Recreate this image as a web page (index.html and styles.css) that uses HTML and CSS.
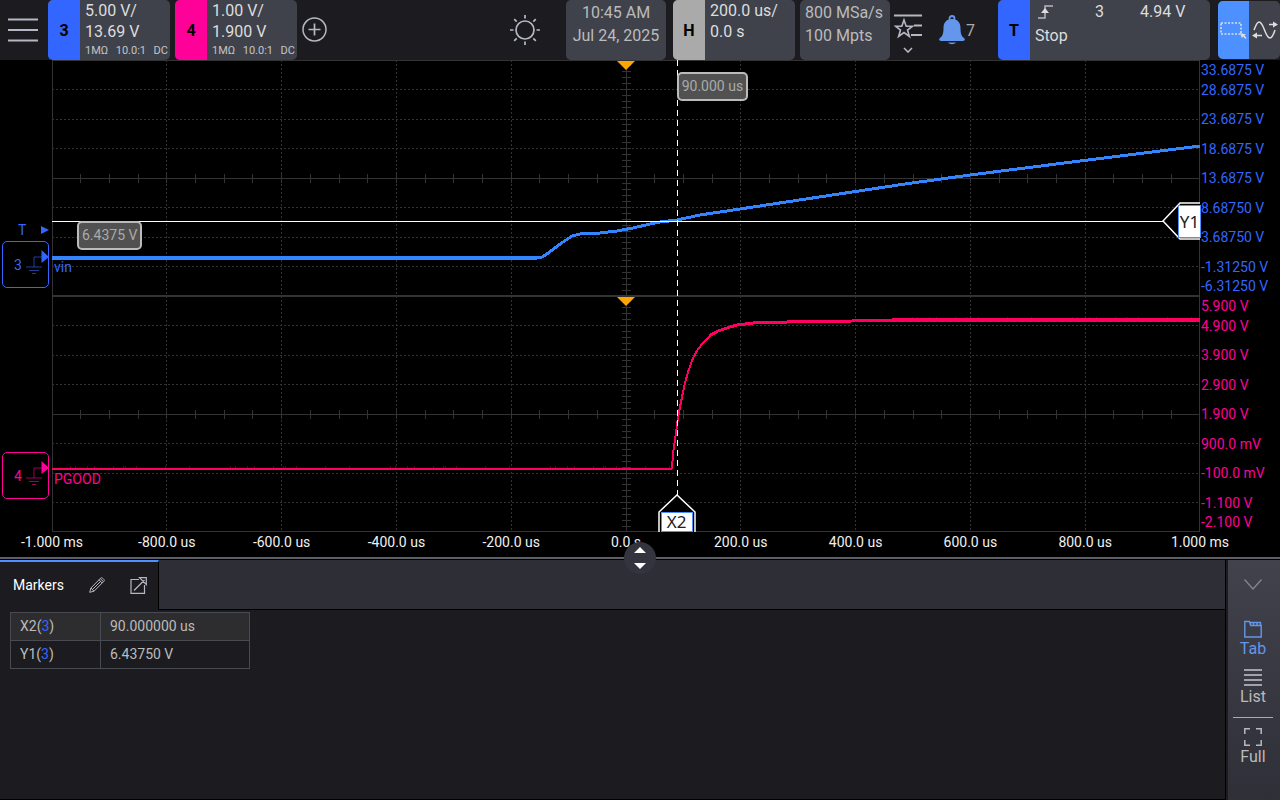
FILE: index.html
```html
<!DOCTYPE html>
<html lang="en">
<head>
    <meta charset="UTF-8" />
    <title>Oscilloscope</title>
    <link rel="stylesheet" href="styles.css">
</head>
<body>
    <div id="scope">
        <header class="topbar">
            <button class="icon-btn menu-btn" aria-label="Menu">
                <svg width="30" height="24" viewBox="0 0 30 24"><path d="M0 1.5h30M0 12h30M0 22.5h30" stroke-width="2" /></svg>
            </button>
            <button class="chip ch3">
                <span class="chip-tag">3</span>
                <span class="chip-body">
                    <span>5.00 V/</span>
                    <span>13.69 V</span>
                    <span class="chip-small"><i>1MΩ</i><i>10.0:1</i><i>DC</i></span>
                </span>
            </button>
            <button class="chip ch4">
                <span class="chip-tag">4</span>
                <span class="chip-body">
                    <span>1.00 V/</span>
                    <span>1.900 V</span>
                    <span class="chip-small"><i>1MΩ</i><i>10.0:1</i><i>DC</i></span>
                </span>
            </button>
            <button class="icon-btn" aria-label="Add channel">
                <svg width="26" height="26" viewBox="0 0 26 26"><circle cx="12.500" cy="12.500" r="11.500" stroke-width="1.5" /><path d="M12.500 6.500v12M6.500 12.500h12" stroke-width="1.7" /></svg>
            </button>

            <button class="icon-btn sun-btn" aria-label="Brightness">
                <svg width="30" height="30" viewBox="0 0 30 30" stroke-width="1.7">
                    <circle cx="15" cy="15" r="9" />
                    <path d="M15 0v3.500M15 26.500v3.500M0 15h3.500M26.500 15h3.500M4.200 4.200l2.500 2.500M23.300 23.300l2.500 2.500M25.800 4.200l-2.500 2.500M6.700 23.300l-2.500 2.500" />
                </svg>
            </button>
            <div class="info clock">
                <span>10:45 AM</span>
                <span>Jul 24, 2025</span>
            </div>
            <button class="chip horiz">
                <span class="chip-tag">H</span>
                <span class="chip-body">
                    <span>200.0 us/</span>
                    <span>0.0 s</span>
                </span>
            </button>
            <div class="info sampling">
                <span>800 MSa/s</span>
                <span>100 Mpts</span>
            </div>
            <button class="icon-btn fav-btn" aria-label="Favorites">
                <svg width="28" height="40" viewBox="0 0 28 40" stroke-width="1.6">
                    <path d="M0 2.500h28M20 12.500h8M17 22h11" stroke-width="1.8" />
                    <path d="M10 7l2.200 6.200h6.300l-5 3.900 1.900 6.400-5.400-3.900-5.400 3.900 1.900-6.400-5-3.900h6.300z" />
                    <path d="M10 35l4 4 4-4" />
                </svg>
            </button>
            <button class="icon-btn bell-btn">
                <svg width="26" height="30" viewBox="0 0 26 30">
                    <circle cx="13" cy="3.500" r="2.500" stroke="#6496ec" stroke-width="1.8" />
                    <path d="M13 4c-6 0-8.500 4-8.500 9 0 6-1 8-4 10.500-.8 1.500 0 2.500 1.500 2.500h22c1.500 0 2.300-1 1.500-2.500-3-2.500-4-4.500-4-10.500 0-5-2.500-9-8.500-9z" fill="#6496ec" stroke="none" />
                    <path d="M9 27.500c1.500 2.300 6.500 2.300 8 0z" fill="#6496ec" stroke="none" />
                </svg>
                7
            </button>
            <button class="chip trigger">
                <span class="chip-tag">T</span>
                <span class="chip-body">
                    <span class="trig-row">
                        <svg width="15" height="14" viewBox="0 0 15 14"><path d="M0 13h7V1h8" stroke-width="1.500" /><path d="M7 3l4 5H3z" fill="#ddd" stroke="none" /></svg>
                        <b>3</b><b>4.94 V</b>
                    </span>
                    <span>Stop</span>
                </span>
            </button>
            <div class="mode">
                <button class="active" aria-label="Zoom box">
                    <svg width="27" height="18" viewBox="0 0 27 18"><path d="M1 2h20v11H1z" stroke-dasharray="2 1.500" stroke-width="1.600" /><path d="M20 12l6 1.500-1.500 1 2 2.500-1.200 1-2-2.500-1.500 1.500z" fill="#ddd" stroke="none" /></svg>
                </button>
                <button aria-label="Pan">
                    <svg width="26" height="18" viewBox="0 0 26 18"><path d="M2 9c2-5 3-8 5-8 5 0 6 16 11 16 2 0 4-5 5-8" stroke-width="1.500" /><path d="M17 3.500h7M2 14.500h8" stroke-width="1.400" /><path d="M26 3.500l-5-3v6zM0 14.500l5-3v6z" fill="#ddd" stroke="none" /></svg>
                </button>
            </div>
        </header>

        <main class="display">
            <div class="plots">
                <section class="lane blue">
                    <div class="gutter">
                        <div class="trig-level">T<svg width="8" height="8" viewBox="0 0 8 8"><path d="M0 0l8 4-8 4z" /></svg></div>
                        <div class="ground g3">3
                            <svg width="24" height="30" viewBox="0 0 24 30"><path d="M9 18V8h8M1 18h16M4 21.500h10M7 24.500h4" class="gnd" /><path d="M16.500 1L24 8l-7.500 6z" /></svg>
                        </div>
                    </div>
                    <div class="graticule">
                        <svg class="grid"></svg>
                        <svg class="trace" viewBox="0 0 1148 236" preserveAspectRatio="none">
                            <path d="M0 198H485" stroke-width="4" />
                            <path d="M485 198L490 197L495 194L503 188L511 182L520 176L528 174L548 173L565 171L581 168L598 164L608 162L625 160L648 155L688 149L853 124L918 115L1028 101L1148 86" stroke-width="3" />
                        </svg>
                        <span class="trace-name vin">vin</span>
                    </div>
                    <div class="scale">
                        <span>33.6875 V</span><span>28.6875 V</span><span>23.6875 V</span><span>18.6875 V</span><span>13.6875 V</span><span>8.68750 V</span><span>3.68750 V</span><span>-1.31250 V</span><span>-6.31250 V</span>
                    </div>
                </section>
                <section class="lane pink">
                    <div class="gutter">
                        <div class="ground g4">4
                            <svg width="24" height="30" viewBox="0 0 24 30"><path d="M9 18V8h8M1 18h16M4 21.500h10M7 24.500h4" class="gnd" /><path d="M16.500 1L24 8l-7.500 6z" /></svg>
                        </div>
                    </div>
                    <div class="graticule">
                        <svg class="grid"></svg>
                        <svg class="trace" viewBox="0 0 1148 236" preserveAspectRatio="none">
                            <path class="noise" d="M18 171H620M860 22H1148" stroke-width="2" stroke-dasharray="1 4 1 11 1 6 1 18 1 9 1 1 1 10 1 28 1 23 1 40" />
                            <path d="M0 173H620" stroke-width="2" />
                            <path d="M620 173L621 158L623 144L625 129L626 121L630 101L633 87L636 76L641 62L646 53L651 47L658 40" stroke-width="2" />
                            <path d="M657 40L666 35L675 32L685 29L701 27L735 26L800 25L1148 24" stroke-width="3" />
                            <path d="M840 24H1148" stroke-width="4" />
                        </svg>
                        <span class="trace-name pgood">PGOOD</span>
                    </div>
                    <div class="scale">
                        <span>5.900 V</span><span>4.900 V</span><span>3.900 V</span><span>2.900 V</span><span>1.900 V</span><span>900.0 mV</span><span>-100.0 mV</span><span>-1.100 V</span><span>-2.100 V</span>
                    </div>
                </section>

                <div class="markers">
                    <div class="line-y"></div>
                    <div class="line-x"></div>
                    <span class="readout read-x">90.000 us</span>
                    <span class="readout read-y">6.4375 V</span>
                    <div class="flag flag-x">
                        <svg width="38" height="38" viewBox="0 0 38 38"><path d="M1 38V18L19 1l18 17v20" /></svg>
                        <span>X2</span>
                    </div>
                    <div class="flag flag-y">
                        <svg width="38" height="38" viewBox="0 0 38 38"><path d="M38 1H18L1 19l17 18h20" /></svg>
                        <span>Y1</span>
                    </div>
                </div>
            </div>
            <div class="time-axis">
                <span>-1.000 ms</span><span>-800.0 us</span><span>-600.0 us</span><span>-400.0 us</span><span>-200.0 us</span><span>0.0 s</span><span>200.0 us</span><span>400.0 us</span><span>600.0 us</span><span>800.0 us</span><span>1.000 ms</span>
            </div>
        </main>

        <div class="splitter">
            <button class="handle" aria-label="Resize panel">
                <svg width="12" height="22" viewBox="0 0 12 22"><path d="M6 0l6 6H0zM6 22l6-6H0z" fill="#fff" stroke="none" /></svg>
            </button>
        </div>

        <footer class="panel">
            <div class="panel-main">
                <div class="tabs">
                    <div class="tab">
                        <span>Markers</span>
                        <button class="icon-btn" aria-label="Edit">
                            <svg width="16" height="16" viewBox="0 0 16 16" stroke-width="1"><path d="M.7 15.300l1.200-4.300L11.500 1.300c.8-.8 1.500-.8 2.200 0l1 1c.8.8.8 1.500 0 2.200L5 14.200zM1.900 11L5 14.200M10 2.800L13.200 6M11.300 1.600l3.100 3.100M3.500 12.500l8.200-8.200" /></svg>
                        </button>
                        <button class="icon-btn" aria-label="Undock">
                            <svg width="17" height="17" viewBox="0 0 17 17" stroke-width="1.200"><path d="M9 2.500H1v13.800h13.500V8M4 13.500L14.500 3M9.500.7h6.800v6.800z" /></svg>
                        </button>
                    </div>
                </div>
                <table class="marker-table">
                    <tr><td>X2(<em>3</em>)</td><td>90.000000 us</td></tr>
                    <tr><td>Y1(<em>3</em>)</td><td>6.43750 V</td></tr>
                </table>
            </div>
            <nav class="side">
                <button class="collapse" aria-label="Collapse">
                    <svg width="18" height="11" viewBox="0 0 18 11"><path d="M.5.5L9 10 17.500.5" stroke="#85868c" stroke-width="1.300" /></svg>
                </button>
                <button class="active">
                    <svg width="18" height="18" viewBox="0 0 18 18" stroke-width="1.400"><path d="M.8 17V1.500h4.700l1.200 4h10.500V17zM6.500 5V2.500h3V5M9.500 5V2.500h3.500V5M13 5V2.500h3.500V5" /></svg>
                    Tab
                </button>
                <button>
                    <svg width="18" height="18" viewBox="0 0 18 18"><path d="M0 2h18M0 7h18M0 12h18M0 17h18" stroke="#a0a3ac" stroke-width="2" /></svg>
                    List
                </button>
                <button class="full">
                    <svg width="18" height="18" viewBox="0 0 18 18"><path d="M.8 6V.8H6M12 .8h5.200V6M17.200 12v5.200H12M6 17.200H.8V12" stroke-width="1.500" /></svg>
                    Full
                </button>
            </nav>
        </footer>
    </div>

    <script>
        // 10 x 8 divisions with fine ticks along both centre axes
        function drawGrid(svg) {
            function line(x1, y1, x2, y2, cls) {
                const el = document.createElementNS("http://www.w3.org/2000/svg", "line");
                el.setAttribute("x1", x1);
                el.setAttribute("y1", y1);
                el.setAttribute("x2", x2);
                el.setAttribute("y2", y2);
                if (cls) el.setAttribute("class", cls);
                svg.appendChild(el);
            }
            for (let i = 1; i < 10; i++) {
                line(i * 10 + "%", 0, i * 10 + "%", "100%", i === 5 ? "" : "dash");
            }
            for (let i = 1; i < 8; i++) {
                line(0, i * 12.5 + "%", "100%", i * 12.5 + "%", i === 4 ? "" : "dash");
            }
            for (let i = 1; i < 40; i++) {
                line(i * 2.5 + "%", "calc(50% - 4px)", i * 2.5 + "%", "calc(50% + 5px)");
                line("calc(50% - 4px)", i * 2.5 + "%", "calc(50% + 5px)", i * 2.5 + "%");
            }
        }

        document.querySelectorAll(".grid").forEach(drawGrid);
    </script>
</body>
</html>
```
FILE: styles.css
```css
* {
    box-sizing: border-box;
}

body {
    margin: 0;
    background: #000;
    color: #ddd;
    font-family: Roboto, sans-serif;
    font-size: 16px;
}

button {
    border: none;
    padding: 0;
    background: none;
    color: inherit;
    font: inherit;
    text-align: left;
    cursor: pointer;
}

svg {
    display: block;
    fill: none;
    stroke: #b5b8c4;
}

#scope {
    display: flex;
    flex-direction: column;
    height: 100vh;
    min-height: 560px;
}

/* top bar */
.topbar {
    display: flex;
    flex-shrink: 0;
    height: 60px;
    background: #1c1b20;
}

.icon-btn {
    display: flex;
    align-items: center;
    flex-shrink: 0;
}

.menu-btn {
    padding: 0 10px 0 8px;
}

.chip {
    display: flex;
    flex-shrink: 0;
    width: 122px;
    margin-right: 5px;
    border-radius: 5px;
    background: #3f424b;
    overflow: hidden;
}

.chip-tag {
    display: flex;
    align-items: center;
    justify-content: center;
    align-self: stretch;
    width: 32px;
    flex-shrink: 0;
    color: #000;
    font-weight: bold;
}

.ch3 .chip-tag, .trigger .chip-tag {
    background: #3366ff;
}

.ch4 .chip-tag {
    background: #ff0099;
}

.horiz .chip-tag {
    background: #aaa;
}

.chip-body {
    display: flex;
    flex-direction: column;
    flex: 1;
    align-self: flex-start;
    padding-left: 5px;
    line-height: 21px;
}

.chip-small {
    display: flex;
    justify-content: space-between;
    padding-right: 2px;
    font-size: 11px;
    line-height: 17px;
    color: #c4c4c4;
}

.chip-small i {
    font-style: normal;
}

.sun-btn {
    margin-left: auto;
    margin-right: 26px;
}

.info {
    display: flex;
    flex-direction: column;
    flex-shrink: 0;
    padding-top: 1px;
    border-radius: 5px;
    background: #3f424b;
    color: #bbb;
    line-height: 23px;
}

.clock {
    width: 100px;
    margin-right: 7px;
    text-align: center;
}

.sampling {
    width: 90px;
    margin-right: 4px;
    padding-left: 5px;
}

.fav-btn {
    margin-right: 17px;
    padding-top: 6px;
}

.bell-btn {
    margin-right: 22px;
    width: 37px;
    gap: 1px;
    color: #aaa;
}

.trigger {
    width: 212px;
    margin-right: 8px;
}

.trigger .chip-body {
    line-height: 24px;
}

.trig-row {
    display: grid;
    grid-template-columns: 57px 45px 1fr;
    align-items: center;
    padding-left: 3px;
}

.trig-row b {
    font-weight: normal;
}

.mode {
    display: flex;
    width: 62px;
    height: 58px;
    margin-top: 1px;
    border-radius: 5px;
    background: #3f424b;
    overflow: hidden;
}

.mode button {
    display: flex;
    align-items: center;
    justify-content: center;
    flex: 1;
}

.mode svg {
    stroke: #ddd;
}

.mode .active {
    background: #4d90ff;
}

/* waveform display */
.display {
    display: flex;
    flex-direction: column;
    flex: 1;
    min-height: 0;
}

.plots {
    position: relative;
    display: flex;
    flex-direction: column;
    flex: 1;
    min-height: 0;
}

.lane {
    display: grid;
    grid-template-columns: 52px minmax(0, 1fr) 80px;
    grid-template-rows: minmax(0, 1fr);
    flex: 1 1 0;
    min-height: 0;
    font-size: 14px;
}

.blue {
    color: #3366ff;
}

.pink {
    color: #ff0099;
}

.gutter {
    position: relative;
}

.gutter svg {
    fill: currentColor;
    stroke: none;
}

.gutter .gnd {
    fill: none;
    stroke: currentColor;
    opacity: 0.6;
}

.trig-level {
    position: absolute;
    top: 72%;
    left: 0;
    right: 3px;
    display: flex;
    align-items: center;
    justify-content: space-between;
    margin-top: -8px;
    padding-left: 18px;
    line-height: 16px;
}

.ground {
    position: absolute;
    left: 2px;
    width: 47px;
    height: 47px;
    display: flex;
    align-items: center;
    justify-content: space-between;
    padding-left: 11px;
    border: 1px solid;
    border-radius: 5px;
}

.ground svg {
    flex-shrink: 0;
    margin-right: -1px;
    margin-bottom: 2px;
}

.g3 {
    top: calc(84% - 17px);
}

.g4 {
    top: calc(73% - 16px);
}

.graticule {
    position: relative;
    border: 1px solid #333;
}

.graticule::after {
    content: "";
    position: absolute;
    left: 50%;
    top: 0;
    margin-left: -9px;
    border: 9px solid transparent;
    border-top-color: #ffa500;
    border-bottom-width: 0;
}

.grid, .trace {
    position: absolute;
    top: -1px;
    left: -1px;
    width: calc(100% + 2px);
    height: calc(100% + 2px);
    shape-rendering: crispEdges;
}

.grid {
    stroke: #333;
}

.dash {
    stroke-dasharray: 2 2;
}

.blue .trace {
    stroke: #3385ff;
}

.pink .trace {
    stroke: #ff0062;
}

.trace path {
    vector-effect: non-scaling-stroke;
}

.pink .noise {
    stroke: #5c0026;
}

.trace-name {
    position: absolute;
    left: 1px;
    line-height: 16px;
}

.vin {
    top: calc(84% + 1px);
}

.pgood {
    top: calc(73% + 3px);
}

.scale {
    display: grid;
    grid-template-rows: minmax(0, 1fr) repeat(7, minmax(0, 2fr)) minmax(0, 1fr);
    align-items: center;
    padding-left: 1px;
    line-height: 20px;
    white-space: nowrap;
}

.scale span:first-child {
    align-self: start;
}

.scale span:last-child {
    align-self: end;
}

/* markers lie over both lanes */
.markers {
    position: absolute;
    top: 0;
    bottom: 0;
    left: 52px;
    right: 80px;
}

.line-x {
    position: absolute;
    left: 54.5%;
    top: 0;
    bottom: 37px;
    width: 1px;
    margin-left: -1px;
    background: repeating-linear-gradient(#fff 0 6px, transparent 6px 10px);
}

.line-y {
    position: absolute;
    top: calc(34% + 1px);
    left: 0;
    right: 37px;
    height: 1px;
    background: #fff;
}

.readout {
    position: absolute;
    padding: 0 3px;
    border: 2px solid #bbb;
    border-radius: 5px;
    background: rgba(90, 90, 90, 0.9);
    color: #aaa;
    font-size: 14px;
    line-height: 25px;
}

.read-x {
    top: 12px;
    left: 54.5%;
    margin-left: -1px;
}

.read-y {
    top: calc(34% + 1px);
    left: 25px;
}

.flag {
    position: absolute;
    width: 38px;
    height: 38px;
}

.flag svg {
    fill: #000;
    stroke: #fff;
    stroke-width: 1.5;
}

.flag span {
    position: absolute;
    border: 1px solid #4d90ff;
    background: #fff;
    color: #222;
    font-family: "Noto Sans", sans-serif;
    font-size: 17px;
    text-align: center;
}

.flag-x {
    left: 54.5%;
    bottom: 0;
    margin-left: -20px;
}

.flag-x span {
    left: 3px;
    right: 3px;
    bottom: 0;
    line-height: 18px;
}

.flag-y {
    right: 0;
    top: 34%;
    margin-top: -18px;
}

.flag-y span {
    top: 3px;
    right: -1px;
    width: 23px;
    line-height: 31px;
}

.time-axis {
    display: flex;
    height: 24px;
    flex-shrink: 0;
    /* half a division out on each side, so labels centre on grid lines */
    margin: 0 calc(80px - (100% - 132px) / 20) 0 calc(52px - (100% - 132px) / 20);
    color: #f0f0f0;
    font-size: 14px;
    line-height: 20px;
}

.time-axis span {
    flex: 1;
    text-align: center;
    white-space: nowrap;
}

/* splitter */
.splitter {
    position: relative;
    flex-shrink: 0;
    height: 4px;
    border-top: 1px solid #000;
    border-bottom: 1px solid #000;
    background: #5d5f67;
}

.handle {
    position: absolute;
    left: 50%;
    top: -15px;
    display: flex;
    align-items: center;
    justify-content: center;
    width: 32px;
    height: 32px;
    margin-left: -16px;
    border-radius: 50%;
    background: #34343e;
}

/* bottom panel */
.panel {
    display: flex;
    flex-shrink: 0;
    height: 240px;
    background: #1c1b20;
}

.panel-main {
    flex: 1;
    min-width: 0;
    border-right: 1px solid #000;
    border-bottom: 1px solid #000;
}

.tabs {
    display: flex;
    height: 50px;
    border-bottom: 1px solid #000;
    background: #2e2e37;
}

.tab {
    display: flex;
    align-items: center;
    width: 159px;
    height: 50px;
    padding: 0 0 2px 13px;
    border-top: 2px solid #4d90ff;
    border-right: 1px solid #000;
    background: #1c1b20;
    color: #fff;
    font-size: 14px;
}

.tab .icon-btn {
    margin-left: 25px;
}

.marker-table {
    width: 240px;
    margin: 2px 0 0 10px;
    border-collapse: collapse;
    table-layout: fixed;
    color: #bbb;
    font-size: 14px;
}

.marker-table td {
    height: 28px;
    padding: 0 9px 2px;
    border: 1px solid #484a52;
}

.marker-table td:first-child {
    width: 90px;
}

.marker-table tr:first-child {
    background: #2d2d2f;
}

.marker-table em {
    color: #3366ff;
    font-style: normal;
}

.side {
    display: flex;
    flex-direction: column;
    align-items: center;
    width: 52px;
    margin-left: 2px;
    padding-top: 19px;
    padding-right: 2px;
    background: linear-gradient(#41424b, #2f2f38);
    color: #bbb;
}

.side button {
    display: flex;
    flex-direction: column;
    align-items: center;
    gap: 1px;
    margin-bottom: 10px;
    line-height: 19px;
}

.side .collapse {
    margin-bottom: 30px;
}

.side .active {
    color: #6496ec;
}

.side .active svg {
    stroke: #6496ec;
}

.side .full {
    width: 40px;
    margin-top: 1px;
    padding-top: 10px;
    border-top: 1px solid #aaa;
}
```
